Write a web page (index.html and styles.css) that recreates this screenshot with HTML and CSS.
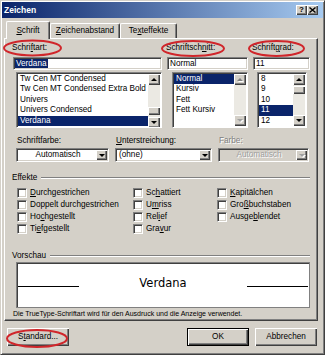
FILE: index.html
```html
<!DOCTYPE html>
<html>
<head>
<meta charset="utf-8">
<link rel="stylesheet" href="styles.css">
</head>
<body>
<div class="dlg">
  <div class="titlebar">
    <span class="ttext">Zeichen</span>
    <span class="tbtns">
      <span class="tbtn">?</span>
      <span class="tbtn"><svg width="7" height="6" viewBox="0 0 7 6"><path d="M0.5 0.5 L6.5 5.5 M6.5 0.5 L0.5 5.5" stroke="#000" stroke-width="1.4" fill="none"/></svg></span>
    </span>
  </div>

  <div class="tabs">
    <div class="tab sel t1"><span><u>S</u>chrift</span></div>
    <div class="tab t2"><span><u>Z</u>eichenabstand</span></div>
    <div class="tab t3"><span>Te<u>x</u>teffekte</span></div>
  </div>

  <div class="panel">
    <div class="fontrow">
      <div class="col">
        <div class="lbl">Schri<u>f</u>tart:</div>
        <div class="field"><span class="hl">Verdana</span></div>
        <div class="list l1">
          <div class="items">
            <div class="it">Tw Cen MT Condensed</div>
            <div class="it">Tw Cen MT Condensed Extra Bold</div>
            <div class="it">Univers</div>
            <div class="it">Univers Condensed</div>
            <div class="it sel">Verdana</div>
          </div>
          <div class="sb">
            <div class="sbb up"></div>
            <div class="thumb t-low"></div>
            <div class="sbb down"></div>
          </div>
        </div>
      </div>
      <div class="col">
        <div class="lbl">Schriftsch<u>n</u>itt:</div>
        <div class="field">Normal</div>
        <div class="list l2">
          <div class="items">
            <div class="it sel">Normal</div>
            <div class="it">Kursiv</div>
            <div class="it">Fett</div>
            <div class="it">Fett Kursiv</div>
          </div>
          <div class="sb">
            <div class="sbb up off"></div>
            <div class="fill"></div>
            <div class="sbb down off"></div>
          </div>
        </div>
      </div>
      <div class="col">
        <div class="lbl">Schrift<u>g</u>rad:</div>
        <div class="field">11</div>
        <div class="list l3">
          <div class="items">
            <div class="it">8</div>
            <div class="it">9</div>
            <div class="it">10</div>
            <div class="it sel">11</div>
            <div class="it">12</div>
          </div>
          <div class="sb">
            <div class="sbb up"></div>
            <div class="thumb t-high"></div>
            <div class="fill"></div>
            <div class="sbb down"></div>
          </div>
        </div>
      </div>
    </div>

    <div class="ddrow">
      <div class="ddcol">
        <div class="lbl">Schriftfarbe:</div>
        <div class="dd"><span class="ddtext center">Automatisch</span><span class="ddbtn"></span></div>
      </div>
      <div class="ddcol">
        <div class="lbl"><u>U</u>nterstreichung:</div>
        <div class="dd"><span class="ddtext">(ohne)</span><span class="ddbtn"></span></div>
      </div>
      <div class="ddcol">
        <div class="lbl disabled">Farbe:</div>
        <div class="dd off"><span class="ddtext center">Automatisch</span><span class="ddbtn off"></span></div>
      </div>
    </div>

    <div class="sep s1"><span>Effekte</span><i></i></div>

    <div class="effects">
      <label class="cb"><span class="box"></span><span><u>D</u>urchgestrichen</span></label>
      <label class="cb"><span class="box"></span><span>Sc<u>h</u>attiert</span></label>
      <label class="cb"><span class="box"></span><span><u>K</u>apitälchen</span></label>
      <label class="cb"><span class="box"></span><span>Doppelt durchgestrichen</span></label>
      <label class="cb"><span class="box"></span><span>U<u>m</u>riss</span></label>
      <label class="cb"><span class="box"></span><span>Gro<u>ß</u>buchstaben</span></label>
      <label class="cb"><span class="box"></span><span>Ho<u>c</u>hgestellt</span></label>
      <label class="cb"><span class="box"></span><span>Rel<u>i</u>ef</span></label>
      <label class="cb"><span class="box"></span><span>Ausge<u>b</u>lendet</span></label>
      <label class="cb"><span class="box"></span><span>Ti<u>e</u>fgestellt</span></label>
      <label class="cb"><span class="box"></span><span>Gra<u>v</u>ur</span></label>
    </div>

    <div class="sep s2"><span>Vorschau</span><i></i></div>

    <div class="preview">
      <span class="pline"></span>
      <span class="ptext">Verdana</span>
      <span class="pline"></span>
    </div>

    <div class="note">Die TrueType-Schriftart wird für den Ausdruck und die Anzeige verwendet.</div>
  </div>

  <div class="footer">
    <div class="btn">S<u>t</u>andard...</div>
    <div class="spacer"></div>
    <div class="btn def">OK</div>
    <div class="btn">Abbrechen</div>
  </div>

  <svg class="marks" width="325" height="355" viewBox="0 0 325 355">
    <ellipse cx="32.5" cy="48" rx="28.5" ry="7.5"/>
    <ellipse cx="193" cy="48.5" rx="31" ry="7.5"/>
    <ellipse cx="276.5" cy="48.5" rx="27.5" ry="7.5"/>
    <ellipse cx="37" cy="338.5" rx="30" ry="8.5"/>
  </svg>
</div>
</body>
</html>
```

FILE: styles.css
```css
* { box-sizing: border-box; margin: 0; padding: 0; }
html, body { width: 325px; height: 355px; overflow: hidden; background: #d4d0c8; }
body {
  font-family: "Liberation Sans", Arial, sans-serif;
  font-size: 8.2px;
  line-height: 10px;
  color: #000;
}
u { text-decoration: underline; text-underline-offset: 1px; }

.dlg {
  position: relative;
  width: 325px;
  height: 355px;
  border: 1px solid;
  border-color: #d4d0c8 #404040 #404040 #d4d0c8;
  box-shadow: inset 1px 1px #fff, inset -1px -1px #808080;
  padding: 1px;
}

/* title bar */
.titlebar {
  height: 16px;
  display: flex;
  align-items: center;
  justify-content: space-between;
  padding: 0 5px 0 2px;
  background: linear-gradient(to right, #0a246a, #a6caf0);
  color: #fff;
  font-weight: bold;
  font-size: 8.5px;
}
.tbtns { display: flex; }
.tbtn {
  width: 11px;
  height: 10px;
  background: #d4d0c8;
  box-shadow: inset 1px 1px #fff, inset -1px -1px #404040, inset -2px -2px #808080;
  color: #000;
  display: flex;
  align-items: center;
  justify-content: center;
  font-size: 8px;
  line-height: 8px;
}

/* tabs */
.tabs {
  display: flex;
  align-items: flex-end;
  height: 20px;
  padding-left: 4px;
  position: relative;
  z-index: 1;
}
.tab {
  height: 15px;
  border: 1px solid;
  border-bottom: none;
  border-color: #fff #404040 #404040 #fff;
  box-shadow: inset -1px 0 #808080;
  border-radius: 2px 2px 0 0;
  display: flex;
  align-items: flex-end;
  justify-content: center;
  padding-bottom: 2px;
  background: #d4d0c8;
}
.tab.sel { height: 18px; margin-bottom: -1px; padding-bottom: 3px; }
.t1 { width: 44px; }
.t2 { width: 70px; }
.t3 { width: 57px; }

/* panel */
.panel {
  margin-left: 2px;
  width: 314px;
  height: 283px;
  border: 1px solid;
  border-color: #fff #404040 #404040 #fff;
  box-shadow: inset -1px -1px #808080;
  padding: 4px 7px 0 8px;
}

.fontrow {
  display: grid;
  grid-template-columns: 149px 81px 57px;
  column-gap: 5px;
}
.lbl { height: 10px; white-space: nowrap; }
.col .lbl { margin-left: -1px; }

.field {
  height: 13px;
  margin-top: 4px;
  background: #fff;
  border: 1px solid;
  border-color: #808080 #fff #fff #808080;
  box-shadow: inset 1px 1px #404040, inset -1px -1px #d4d0c8;
  padding: 1px 2px 0 2px;
  line-height: 10px;
  white-space: nowrap;
}
.hl { background: #0a246a; color: #fff; padding: 0 1px; margin-left: -1px; }

.list {
  margin-top: 2px;
  height: 56px;
  display: flex;
  background: #fff;
  border: 1px solid;
  border-color: #808080 #fff #fff #808080;
  box-shadow: inset 1px 1px #404040;
  padding: 1px;
  overflow: hidden;
}
.l1 { margin-left: 3px; }
.l2 { margin-left: 5px; }
.l3 { margin-left: 4px; margin-right: 3px; }
.items { flex: 1; min-width: 0; }
.it { height: 10.4px; line-height: 10.4px; padding-left: 2px; white-space: nowrap; overflow: hidden; }
.it.sel { background: #0a246a; color: #fff; }

.sb {
  width: 12px;
  flex: none;
  display: flex;
  flex-direction: column;
  background: #ebe9e3;
}
.sbb, .thumb, .ddbtn, .btn {
  background: #d4d0c8;
  box-shadow: inset 1px 1px #fff, inset -1px -1px #404040, inset -2px -2px #808080;
}
.sbb { height: 11px; flex: none; display: flex; align-items: center; justify-content: center; }
.fill { flex: 1; }
.thumb { flex: none; height: 8px; }
.t-low { margin-top: 22px; margin-bottom: 2px; }
.t-high { margin-top: 1px; }

.sbb.up::before, .sbb.down::before, .ddbtn::before {
  content: "";
  width: 0;
  height: 0;
  border-left: 3px solid transparent;
  border-right: 3px solid transparent;
}
.sbb.up::before { border-bottom: 3px solid #000; }
.sbb.down::before, .ddbtn::before { border-top: 3px solid #000; }
.sbb.up.off::before { border-bottom-color: #808080; filter: drop-shadow(1px 1px 0 #fff); }
.sbb.down.off::before, .ddbtn.off::before { border-top-color: #a0a0a0; filter: drop-shadow(1px 1px 0 #fff); }

/* dropdown row */
.ddrow {
  display: grid;
  grid-template-columns: 93px 97px 91px;
  column-gap: 6px;
  padding-left: 3px;
  margin-top: 8px;
}
.ddcol .lbl { padding-left: 1px; }
.lbl.disabled { color: #808080; text-shadow: 1px 1px 0 #fff; }
.dd {
  margin-top: 2px;
  height: 14px;
  display: flex;
  background: #fff;
  border: 1px solid;
  border-color: #808080 #fff #fff #808080;
  box-shadow: inset 1px 1px #404040, inset -1px -1px #d4d0c8;
  padding: 1px;
}
.dd.off { background: #d4d0c8; color: #a0a0a0; }
.dd.off .ddtext { text-shadow: 1px 1px 0 #fff; }
.ddtext { flex: 1; line-height: 10px; padding-left: 2px; white-space: nowrap; }
.ddtext.center { text-align: center; }
.ddbtn { width: 11px; height: 10px; flex: none; display: flex; align-items: center; justify-content: center; }

/* separators */
.sep { display: flex; align-items: center; height: 10px; }
.sep span { margin-left: -1px; white-space: nowrap; }
.sep i { flex: 1; height: 2px; margin-left: 4px; border-top: 1px solid #808080; border-bottom: 1px solid #fff; }
.s1 { margin-top: 11px; }
.s2 { margin-top: 16px; }

/* effects */
.effects {
  margin-top: 4px;
  display: grid;
  grid-template-columns: 116px 84px 1fr;
  grid-auto-rows: 12px;
  padding-left: 4px;
}
.cb { display: flex; align-items: center; white-space: nowrap; }
.box {
  width: 10px;
  height: 10px;
  flex: none;
  background: #fff;
  border: 1px solid;
  border-color: #808080 #fff #fff #808080;
  box-shadow: inset 1px 1px #404040, inset -1px -1px #d4d0c8;
  margin-right: 3px;
}

/* preview */
.preview {
  margin-top: 1px;
  margin-left: 3px;
  height: 46px;
  background: #fff;
  border: 1px solid #808080;
  box-shadow: inset 1px 1px #404040;
  display: flex;
  align-items: baseline;
  justify-content: space-between;
  padding: 13px 1px 0 1px;
}
.ptext {
  font-family: "DejaVu Sans", Verdana, sans-serif;
  font-size: 11.5px;
  line-height: 14px;
}
.pline { width: 61px; height: 1px; background: #000; }

.note {
  margin-top: 1px;
  font-size: 7px;
  line-height: 10px;
  white-space: nowrap;
}

/* footer */
.footer {
  display: flex;
  margin-top: 7px;
  height: 18px;
  padding: 0 6px 0 5px;
}
.spacer { flex: 1; }
.btn {
  width: 62px;
  height: 18px;
  display: flex;
  align-items: center;
  justify-content: center;
}
.btn + .btn { margin-left: 6px; }
.btn.def {
  box-shadow: inset 0 0 0 1px #000, inset 2px 2px #fff, inset -2px -2px #404040, inset -3px -3px #808080;
}

/* annotation marks */
.marks {
  position: absolute;
  left: -1px;
  top: -1px;
  pointer-events: none;
}
.marks ellipse { fill: none; stroke: #d0262b; stroke-width: 2; }
```
